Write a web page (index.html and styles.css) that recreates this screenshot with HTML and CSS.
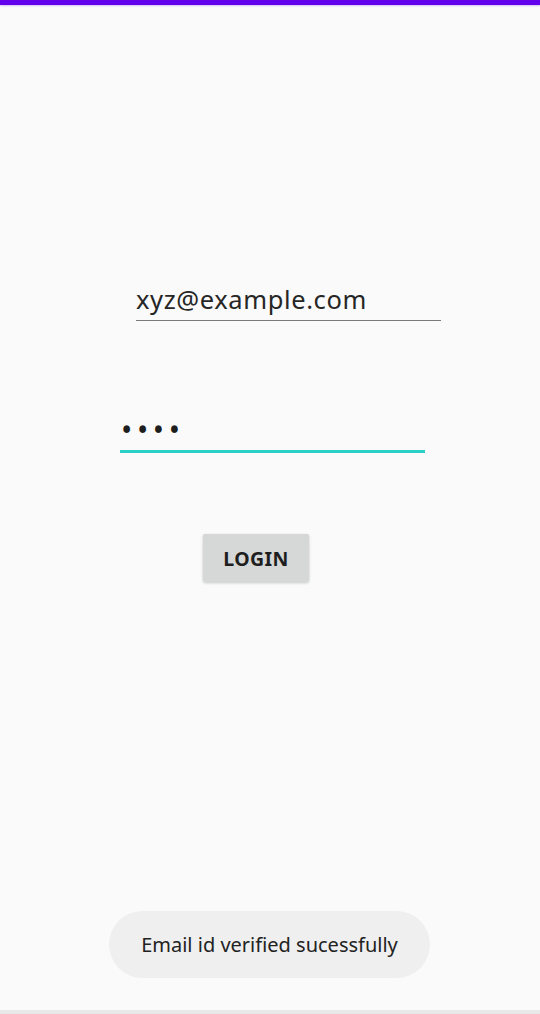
FILE: index.html
```html
<!DOCTYPE html>
<html>
<head>
<meta charset="utf-8">
<link rel="stylesheet" href="styles.css">
</head>
<body>
<div class="screen">
  <div class="status"></div>
  <div class="content">
    <div class="field email"><span class="value">xyz@example.com</span></div>
    <div class="field password"><span class="dots">••••</span></div>
    <button class="login">LOGIN</button>
  </div>
  <div class="toast">Email id verified sucessfully</div>
  <div class="navstrip"></div>
</div>
</body>
</html>
```
FILE: styles.css
```css
html, body {
  margin: 0;
  padding: 0;
  background: #fafafa;
}
.screen {
  width: 540px;
  height: 1014px;
  display: flex;
  flex-direction: column;
  background: #fafafa;
  font-family: "Noto Sans", "Open Sans", sans-serif;
  color: #222;
}
.status {
  height: 5px;
  background: #6200ee;
  box-shadow: 0 1px 2px rgba(98, 0, 238, 0.25);
}
.content {
  flex: 1;
  display: flex;
  flex-direction: column;
}
.field {
  width: 305px;
  box-sizing: border-box;
  display: flex;
  align-items: flex-end;
}
.email {
  margin: 271px 0 0 136px;
  height: 45px;
  border-bottom: 1px solid #7a7a7a;
  padding-bottom: 6px;
}
.email .value {
  font-size: 25.5px;
  line-height: 30px;
  letter-spacing: 0.6px;
  color: #262626;
}
.password {
  margin: 90px 0 0 120px;
  height: 42px;
  border-bottom: 3px solid #2ad0c8;
  padding: 0 0 5px 1px;
}
.password .dots {
  font-size: 30px;
  line-height: 30px;
  letter-spacing: 4.6px;
  color: #1e1e1e;
}
.login {
  margin: 81px 0 0 203px;
  width: 106px;
  height: 48px;
  border: none;
  border-radius: 2px;
  background: #d6d7d7;
  box-shadow: 0 1px 3px rgba(0, 0, 0, 0.2);
  font-family: "Noto Sans", "Open Sans", sans-serif;
  font-weight: 700;
  font-size: 19.5px;
  color: #1e1e1e;
  letter-spacing: 0.4px;
  padding: 0;
}
.toast {
  margin: 0 0 32px 109px;
  width: 321px;
  height: 67px;
  border-radius: 34px;
  background: #efefef;
  display: flex;
  align-items: center;
  justify-content: center;
  font-size: 20px;
  color: #222;
}
.navstrip {
  height: 4px;
  background: #e8e8e8;
}
```
